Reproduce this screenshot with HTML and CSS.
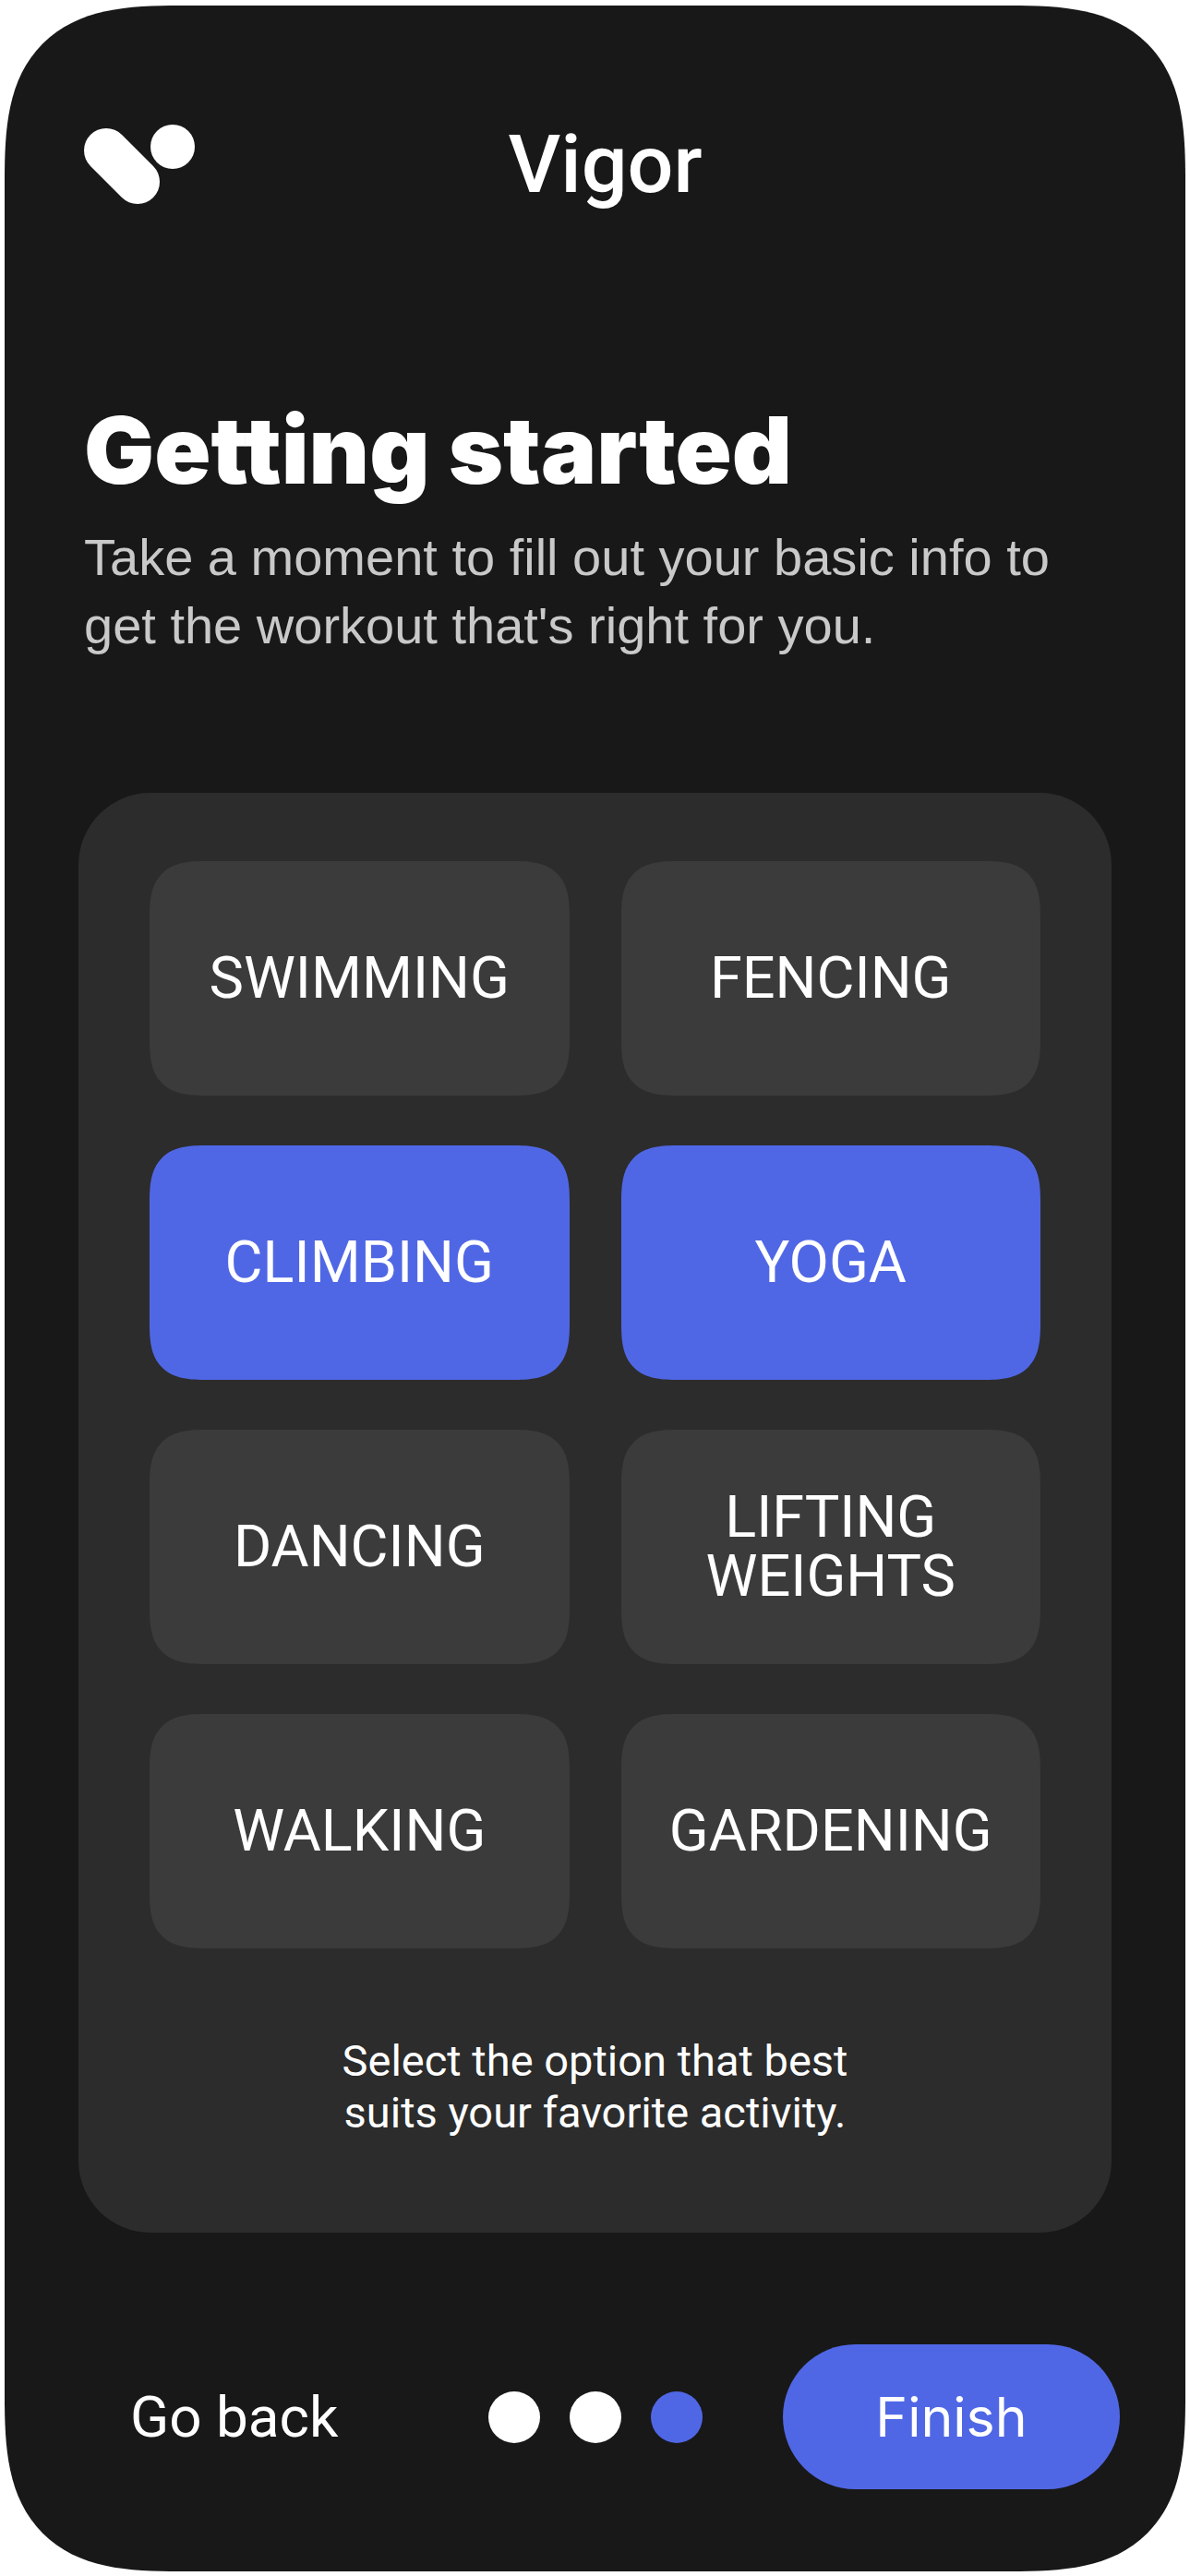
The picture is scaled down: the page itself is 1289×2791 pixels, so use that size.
FILE: index.html
```html
<!DOCTYPE html>
<html lang="en">
<head>
  <meta charset="utf-8">
  <meta name="viewport" content="width=device-width, initial-scale=1">
  <title>Vigor – Getting started</title>
  <link rel="stylesheet" href="styles.css">
</head>
<body>
  <div class="screen">
    <header class="topbar">
      <svg class="logo" viewBox="0 0 120 86" aria-hidden="true">
        <path d="M24 28 L58 62" fill="none" stroke="#fff" stroke-width="48" stroke-linecap="round"/>
        <circle cx="96" cy="24" r="24" fill="#fff"/>
      </svg>
      <p class="brand">Vigor</p>
    </header>

    <section class="intro">
      <h1 class="title">Getting started</h1>
      <p class="lead">Take a moment to fill out your basic info to get the workout that's right for you.</p>
    </section>

    <main class="card">
      <div class="options" role="group" aria-labelledby="hint">
        <button class="option" type="button" aria-pressed="false">SWIMMING</button>
        <button class="option" type="button" aria-pressed="false">FENCING</button>
        <button class="option" type="button" aria-pressed="true">CLIMBING</button>
        <button class="option" type="button" aria-pressed="true">YOGA</button>
        <button class="option" type="button" aria-pressed="false">DANCING</button>
        <button class="option" type="button" aria-pressed="false">LIFTING WEIGHTS</button>
        <button class="option" type="button" aria-pressed="false">WALKING</button>
        <button class="option" type="button" aria-pressed="false">GARDENING</button>
      </div>
      <p class="hint" id="hint">Select the option that best suits your favorite activity.</p>
    </main>

    <footer class="actions">
      <button class="back" type="button">Go back</button>
      <ol class="steps">
        <li class="step"></li>
        <li class="step"></li>
        <li class="step step-current" aria-current="step"></li>
      </ol>
      <button class="finish" type="button">Finish</button>
    </footer>
  </div>
</body>
</html>
```

FILE: styles.css
```css
* {
  box-sizing: border-box;
}

body {
  margin: 0;
  padding: 6px 5px 5px;
  background: #fff;
  color: #fff;
  font-family: Roboto, "Noto Sans", sans-serif;
}

p, h1, ol {
  margin: 0;
  padding: 0;
}

button {
  border: 0;
  padding: 0;
  background: none;
  color: inherit;
  font-family: inherit;
  cursor: pointer;
}

.screen {
  padding: 118px 80px 89px;
  border-radius: 144px;
  background: #181818;
}

.topbar {
  display: grid;
  grid-template-columns: 120px 1fr 120px;
  align-items: center;
  padding-left: 6px;
}

.logo {
  display: block;
  width: 120px;
  height: 86px;
}

.brand {
  padding-left: 16px;
  font-size: 88px;
  font-weight: 500;
  line-height: 108px;
  text-align: center;
}

.intro {
  padding: 195px 0 144px 6px;
}

.title {
  font-family: Inter, sans-serif;
  font-size: 101px;
  font-weight: 900;
  font-variant-ligatures: none;
  line-height: 120px;
}

.lead {
  max-width: 1080px;
  margin-top: 20px;
  color: #c9c9c9;
  font-family: "Liberation Sans", Arial, sans-serif;
  font-size: 56px;
  line-height: 74px;
}

.card {
  padding: 74px 77px 102px;
  border-radius: 78px;
  background: #2c2c2c;
}

.options {
  display: grid;
  grid-template-columns: 1fr 1fr;
  grid-auto-rows: 254px;
  gap: 54px 56px;
}

.option {
  padding: 0 48px;
  border-radius: 48px;
  background: #3b3b3b;
  font-size: 63px;
  line-height: 64px;
}

.option[aria-pressed="true"] {
  background: #5067e5;
}

.hint {
  max-width: 600px;
  margin: 94px auto 0;
  font-size: 47px;
  line-height: 56px;
  text-align: center;
}

.actions {
  display: flex;
  align-items: center;
  justify-content: space-between;
  margin-top: 121px;
  margin-right: -9px;
  padding-left: 56px;
}

.back {
  font-size: 62px;
  line-height: 74px;
}

.steps {
  display: flex;
  gap: 32px;
  margin-left: 76px;
  list-style: none;
}

.step {
  width: 56px;
  height: 56px;
  border-radius: 50%;
  background: #fff;
}

.step-current {
  background: #5067e5;
}

.finish {
  width: 365px;
  height: 157px;
  border-radius: 80px;
  background: #5067e5;
  font-family: Inter, sans-serif;
  font-size: 59px;
}

/* Smooth, continuous corners where the browser can draw them */
@supports (corner-shape: superellipse(1.5)) {
  .screen {
    border-radius: 190px;
    corner-shape: superellipse(1.5);
  }

  .option {
    border-radius: 62px;
    corner-shape: superellipse(1.5);
  }
}
```
